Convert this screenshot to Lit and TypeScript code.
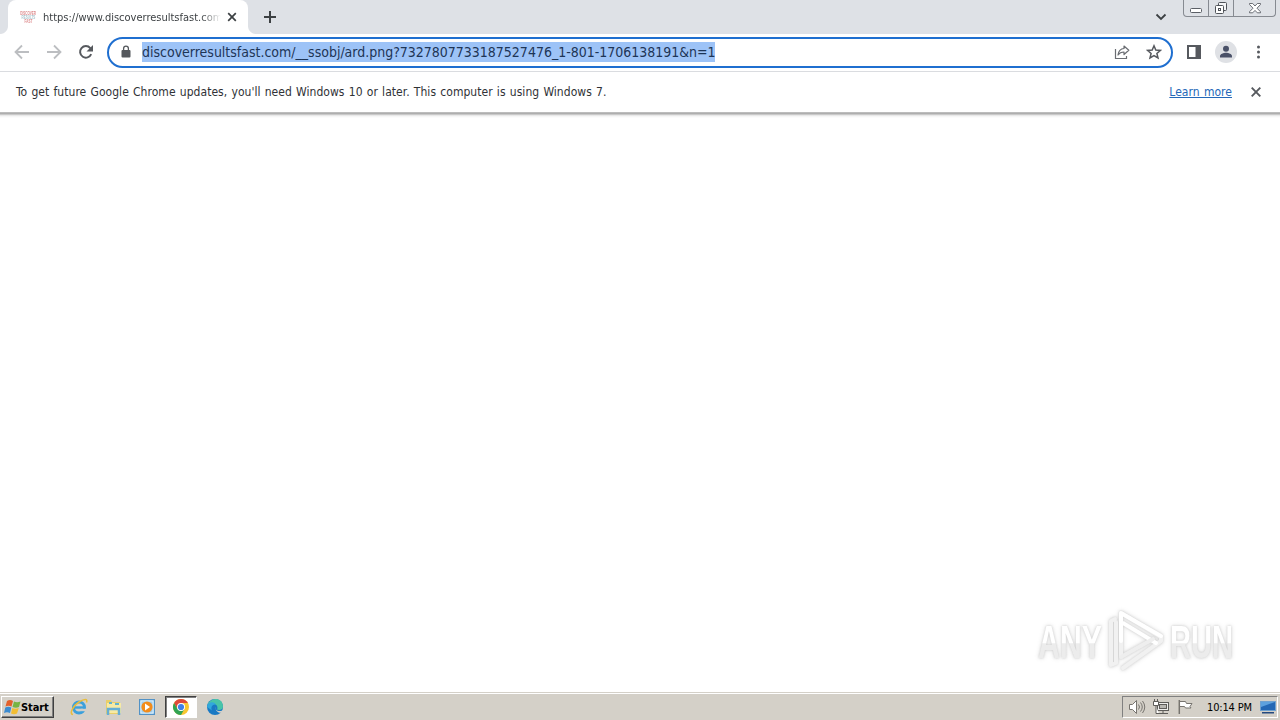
import { LitElement, html, css, svg } from 'lit';
import { customElement, property } from 'lit/decorators.js';

const FONT = css`"DejaVu Sans Condensed", "DejaVu Sans", Tahoma, sans-serif`;

@customElement('browser-tabs')
class BrowserTabs extends LitElement {
    static styles = css`
    :host {
        display: flex;
        height: 34px;
        background: #dee1e6;
        font-family: ${FONT};
        color: #3c4043;
    }
    .tab {
        display: flex;
        align-items: center;
        box-sizing: border-box;
        width: 240px;
        margin-left: 8px;
        padding-left: 12px;
        background: #fff;
        border-radius: 8px 8px 0 0;
        position: relative;
    }
    .tab::before, .tab::after {
        content: '';
        position: absolute;
        bottom: 0;
        width: 8px;
        height: 8px;
    }
    .tab::before {
        left: -8px;
        background: radial-gradient(circle at 0 0, #dee1e6 7.5px, #fff 8.5px);
    }
    .tab::after {
        right: -8px;
        background: radial-gradient(circle at 100% 0, #dee1e6 7.5px, #fff 8.5px);
    }
    .favicon {
        display: flex;
        flex-direction: column;
        align-items: center;
        width: 16px;
        font: bold 5px/4px "Liberation Sans", sans-serif;
        color: #dd8a8c;
    }
    .favicon span {
        transform: scaleX(0.6);
    }
    .favicon .mid {
        color: #a9c3cc;
    }
    .title {
        width: 178px;
        margin-left: 7px;
        overflow: hidden;
        white-space: nowrap;
        font-size: 11px;
        -webkit-mask-image: linear-gradient(to right, #000 158px, transparent 178px);
        mask-image: linear-gradient(to right, #000 158px, transparent 178px);
    }
    .close {
        margin-left: 6px;
    }
    .plus {
        margin: 9px 0 0 14px;
    }
    .search {
        margin: 13px 16px 0 auto;
    }
    .controls {
        display: flex;
        box-sizing: border-box;
        width: 93px;
        height: 17px;
        margin-right: 4px;
        border: 1px solid #868a91;
        border-top: none;
        border-radius: 0 0 4px 4px;
    }
    .controls div {
        display: flex;
        justify-content: center;
        width: 25px;
        box-sizing: border-box;
        border-right: 1px solid #868a91;
    }
    .controls div:last-child {
        flex: 1;
        border-right: none;
    }
    svg {
        display: block;
        fill: none;
    }
    `;

    render() {
        return html`
            <div class="tab">
                <div class="favicon"><span>DISCOVER</span><span class="mid">RESULTS</span><span>FAST</span></div>
                <div class="title">https://www.discoverresultsfast.com</div>
                <svg class="close" width="10" height="10" stroke="#3c4043" stroke-width="1.7"><path d="M1.2 1.2 8.8 8.8M8.8 1.2 1.2 8.8"/></svg>
            </div>
            <svg class="plus" width="16" height="16" stroke="#3c4043" stroke-width="2"><path d="M8 2v12M2 8h12"/></svg>
            <svg class="search" width="12" height="8" stroke="#3c4043" stroke-width="1.8"><path d="M1.5 1.5 6 6l4.500-4.500"/></svg>
            <div class="controls">
                <div><svg width="24" height="16" stroke="#5b5f66"><rect x="6.500" y="8.500" width="11" height="4" rx="1" fill="#fff"/></svg></div>
                <div><svg width="24" height="16" stroke="#4f5359" fill="#fff"><rect x="9.500" y="2.500" width="8" height="8" rx="1" fill="#f4f5f7"/><rect x="6.500" y="5.500" width="8" height="8" rx="1" fill="#fff"/><rect x="9.500" y="8.500" width="2" height="2"/></svg></div>
                <div><svg width="24" height="16" stroke="#5b5f66" stroke-width="0.9"><path fill="#fff" d="M6.500 3.500h3.200L12 6l2.300-2.500h3.200v1L14 8.200l3.500 3.600v1h-3.200L12 10.400l-2.300 2.400H6.500v-1L10 8.200 6.500 4.500z"/></svg></div>
            </div>
        `;
    }
}

@customElement('browser-toolbar')
class BrowserToolbar extends LitElement {
    static styles = css`
    :host {
        display: flex;
        align-items: center;
        height: 38px;
        padding: 0 0 1px 14px;
        box-sizing: border-box;
        background: #fff;
        border-bottom: 1px solid #dadce0;
        font-family: ${FONT};
    }
    svg {
        display: block;
        fill: none;
        flex: none;
    }
    .nav {
        display: flex;
        gap: 16px;
    }
    .omnibox {
        display: flex;
        align-items: center;
        box-sizing: border-box;
        width: 1066px;
        height: 31px;
        margin: 1px 0 0 13px;
        padding: 0 9px 1px 11px;
        border: 2px solid #1f6fd0;
        border-radius: 16px;
    }
    .url {
        width: 573px;
        height: 20px;
        margin-left: 10px;
        background: #9dc3f7;
        color: #1d3556;
        font-size: 14px;
        line-height: 21px;
        white-space: nowrap;
        letter-spacing: -0.01px;
    }
    .share {
        margin-left: auto;
    }
    .star {
        margin-left: 16px;
    }
    .panel {
        margin-left: 13px;
    }
    .avatar {
        margin-left: 13px;
    }
    .menu {
        margin-left: 13px;
    }
    `;

    @property() url = '';

    render() {
        return html`
            <div class="nav">
                <svg width="16" height="16" stroke="#bcbec1" stroke-width="1.8"><path d="M15 8H2M8 1.500 1.500 8 8 14.500"/></svg>
                <svg width="16" height="16" stroke="#bcbec1" stroke-width="1.8"><path d="M1 8h13M8 1.500 14.500 8 8 14.500"/></svg>
                <svg width="16" height="16"><path stroke="#56595e" stroke-width="2" d="M13.200 10.200A5.800 5.800 0 1 1 12.300 4.100L14 6"/><path fill="#56595e" d="M15 1v6.500H8.500z"/></svg>
            </div>
            <div class="omnibox">
                <svg width="12" height="14"><rect x="1.500" y="5" width="9" height="7.500" rx="1" fill="#55585d"/><path stroke="#55585d" stroke-width="1.300" d="M3.600 5.500V3.600a2.400 2.400 0 0 1 4.800 0v1.900"/></svg>
                <div class="url">${this.url}</div>
                <svg class="share" width="16" height="16" stroke="#6a6d72" stroke-width="1.200"><path d="M1.500 5v9.500h11V12"/><path stroke-linejoin="round" d="M4 11c.5-4 2.500-6.300 6-6.500V2l4.800 4.300L10 10.500V8C7.500 8 5.500 8.800 4 11z"/></svg>
                <svg class="star" width="16" height="16" stroke="#56595e" stroke-width="1.500"><path d="M8 1.800l1.800 4.200 4.600.4-3.500 3 1.100 4.500L8 11.500l-4 2.400 1.100-4.500-3.500-3L6.200 6z"/></svg>
            </div>
            <svg class="panel" width="16" height="16"><rect x="2" y="2" width="12" height="12" stroke="#56595e" stroke-width="2"/><path fill="#56595e" d="M9.500 2H14v12H9.500z"/></svg>
            <svg class="avatar" width="22" height="22"><circle cx="11" cy="11" r="11" fill="#dfe1e5"/><circle cx="11" cy="7.800" r="3" fill="#4a5168"/><path fill="#4a5168" d="M5 16.500v-1.300c0-2.200 3.600-3.400 6-3.400s6 1.200 6 3.400v1.300z"/></svg>
            <svg class="menu" width="16" height="16" viewBox="0 0 16 16"><g fill="#56595e"><circle cx="8.500" cy="3" r="1.500"/><circle cx="8.500" cy="8" r="1.500"/><circle cx="8.500" cy="13" r="1.500"/></g></svg>
        `;
    }
}

@customElement('info-bar')
class InfoBar extends LitElement {
    static styles = css`
    :host {
        display: flex;
        align-items: center;
        box-sizing: border-box;
        height: 40px;
        padding: 0 19px 0 16px;
        background: #fff;
        font: 12px ${FONT};
        color: #303236;
        white-space: nowrap;
        letter-spacing: 0.04px;
        word-spacing: 0.75px;
    }
    a {
        margin-left: auto;
        color: #2468b8;
        text-decoration: underline;
    }
    svg {
        margin-left: 19px;
    }
    `;

    render() {
        return html`
            <span>To get future Google Chrome updates, you'll need Windows 10 or later. This computer is using Windows 7.</span>
            <a>Learn more</a>
            <svg width="10" height="10" stroke="#56595e" stroke-width="1.9"><path d="M.7.7l8.600 8.600M9.300.7.7 9.300"/></svg>
        `;
    }
}

@customElement('any-run-mark')
class AnyRunMark extends LitElement {
    static styles = css`
    :host {
        display: flex;
        align-items: center;
        font: bold 47px/60px "Liberation Sans", sans-serif;
        filter: drop-shadow(0 0 1px #d0d0d0) drop-shadow(0 0 2px #e2e2e2);
    }
    .word {
        width: 65px;
        padding-top: 3px;
    }
    .word span {
        display: inline-block;
        transform: scaleX(0.645);
        transform-origin: 0 50%;
        background: linear-gradient(#fff 51%, #ececec 53%);
        -webkit-background-clip: text;
        background-clip: text;
        color: transparent;
    }
    .word:last-child span {
        transform: scaleX(0.62);
    }
    svg {
        display: block;
        margin: 0 4px 0 5px;
        fill: none;
    }
    `;

    render() {
        return html`
            <div class="word"><span>ANY</span></div>
            <svg width="58" height="62" stroke-width="4" stroke-linejoin="round" stroke-linecap="round">
                <path stroke="#f1f1f1" d="M13 47V3l40 24v4L15 58"/>
                <path stroke="#f1f1f1" d="M7 9 3 11v44l5-2V12"/>
                <path stroke="#fff" d="M13 31V3l40 23M15 13l33 20"/>
                <path stroke="#eee" d="M13 47l32-18"/>
            </svg>
            <div class="word"><span>RUN</span></div>
        `;
    }
}

const icons = {
    ie: svg`
        <circle cx="10" cy="10.500" r="5.500" stroke="#3ba0dc" stroke-width="3"/>
        <path stroke="#3ba0dc" stroke-width="2.400" d="M5 10.500h11"/>
        <path fill="#d2cfca" d="M12 11.800h6v2.400h-6z"/>
        <path stroke="#e8bd3c" stroke-width="1.500" d="M4 17.500C-.5 17 4.500 8.500 10 5s9-3.500 7.500.5"/>`,
    folder: svg`
        <path fill="#e9cf69" d="M3 3h5l1 2h8v12H3z"/>
        <path fill="#f7eaa4" d="M4 6h14v10H4z"/>
        <path fill="#63b3cf" d="M6 5h3v2H6zM12 6h4v2h-4z"/>
        <path stroke="#65aed5" stroke-width="2.500" d="M5 18v-6h11v6"/>`,
    player: svg`
        <rect x="2.500" y="2.500" width="15" height="15" fill="#9ccbed" stroke="#5292c6"/>
        <path stroke="#dceffa" d="M4 4h12v12H4z"/>
        <circle cx="10" cy="10" r="5.600" fill="#f28c1b"/>
        <path fill="#fff" d="M8 6.500v7l5-3.500z"/>`,
    chrome: svg`
        <circle cx="10" cy="10" r="8" fill="#f8c630"/>
        <path fill="#df493b" d="M3.070 6A8 8 0 0 1 16.930 6H10L6.540 12z"/>
        <path fill="#30a353" d="M3.070 6A8 8 0 0 0 10 18l3.460-6H6.540z"/>
        <circle cx="10" cy="10" r="4" fill="#fff"/>
        <circle cx="10" cy="10" r="3.100" fill="#4080e8"/>`,
    edge: svg`
        <circle cx="10" cy="10" r="8" fill="#1979c4"/>
        <path fill="#48c4a8" d="M2.500 7.500C6 0 17.500 0 18 9.500c0 3-3 4-6 3 1.500-3-1-6-4.500-6-2 0-3.500.4-5 1z"/>
        <path fill="#31a8dc" d="M2 10c.5-4.500 6-6.500 9-2.500-4-.5-5.500 3-4 6z"/>
        <path fill="#d4d0c8" d="M10.500 10c-1 3 2.500 5 7 3.500l1.500-.5-.5 2c-3 2-8.500 0-8-5z"/>`
};

@customElement('task-bar')
class TaskBar extends LitElement {
    static styles = css`
    :host {
        display: flex;
        align-items: center;
        box-sizing: border-box;
        height: 28px;
        padding: 1px 2px 0 1px;
        background: #d4d0c8;
        border-top: 1px solid #d4d0c8;
        box-shadow: inset 0 1px #fff;
        font: 11px ${FONT};
        color: #000;
    }
    svg {
        display: block;
        fill: none;
    }
    .start {
        display: flex;
        align-items: center;
        box-sizing: border-box;
        width: 53px;
        height: 22px;
        padding-left: 2px;
        border: 1px solid;
        border-color: #fff #404040 #404040 #fff;
        box-shadow: inset -1px -1px #808080;
        font-weight: bold;
        letter-spacing: -0.1px;
    }
    .start svg {
        flex: none;
        margin-right: -1px;
    }
    .apps {
        display: flex;
        gap: 2px;
        margin-left: 9px;
    }
    .app {
        display: flex;
        align-items: center;
        justify-content: center;
        box-sizing: border-box;
        width: 32px;
        height: 22px;
    }
    .app.active {
        background: #fff;
        border: 1px solid;
        border-color: #404040 #fff #fff #404040;
        box-shadow: inset 1px 1px #808080;
    }
    .tray {
        display: flex;
        align-items: center;
        box-sizing: border-box;
        width: 156px;
        height: 22px;
        margin-left: auto;
        padding-left: 4px;
        border: 1px solid;
        border-color: #808080 #fff #fff #808080;
    }
    .tray svg {
        flex: none;
        margin-right: 6px;
    }
    .clock {
        width: 46px;
        margin-left: 7px;
        margin-right: 8px;
        white-space: nowrap;
        letter-spacing: -0.15px;
    }
    `;

    @property() active = 'chrome';

    render() {
        return html`
            <div class="start">
                <svg width="18" height="18"><path fill="#e3602b" d="M3 3c2-1.500 4-1.500 6 0L7.500 8.500c-2-1-4-1-6 0z"/><path fill="#77b443" d="M10 3.500c2 1 4 1 6.500 0L15 9c-2 1-4 1-6.500 0z"/><path fill="#3b8bd0" d="M1.300 9.500c2-1 4-1 6 0L6 15c-2-1-4-1-6 0z"/><path fill="#f2bd32" d="M8.300 10c2 1 4 1 6.500 0L13 15.500c-2 1-4 1-6 0z"/></svg>
                <span>Start</span>
            </div>
            <div class="apps">
                ${Object.entries(icons).map(([name, icon]) => html`
                    <div class="app ${name === this.active ? 'active' : ''}">
                        <svg width="18" height="18" viewBox="1 1 18 18">${icon}</svg>
                    </div>`)}
            </div>
            <div class="tray">
                <svg width="19" height="18" stroke="#77746f" fill="#fff"><path fill="#fff" d="M2.500 6.500h3l4-4v13l-4-4h-3z"/><path fill="none" d="M11.500 6.500q2 2.500 0 5M13.500 4.500q3.500 4.500 0 9M15.500 3q4.500 6 0 12"/></svg>
                <svg width="18" height="18" stroke="#5e5c59"><rect x="5.500" y="4.500" width="11" height="8" fill="#efeeec"/><rect x="7.500" y="6.500" width="7" height="4" fill="#b9b7b2"/><path d="M11 13v2.500M6 15.500h10"/><path fill="#fff" d="M1.500 3.500h5v4h-5zM2.500 1v2.500M5.500 1v2.500M4 8v7.500h3"/></svg>
                <svg width="18" height="18" stroke="#77746f"><path fill="#fff" d="M3.500 3.500h6l1 2h5.500l-2 3 1 1.500H9.500l-1-1.500h-5"/><path stroke-width="1.500" d="M3.300 2v14"/></svg>
                <span class="clock">10:14 PM</span>
                <svg width="17" height="16"><rect x=".5" y="2.500" width="15" height="9" fill="#2468b5" stroke="#70a1cf"/><path fill="#5da1de" d="M1 3h14L1 8z"/><path fill="#24497e" d="M2 13h12v1.500H2z"/></svg>
            </div>
        `;
    }
}

@customElement('app-root')
class AppRoot extends LitElement {
    static styles = css`
    :host {
        display: flex;
        flex-direction: column;
        width: 1280px;
        height: 720px;
        overflow: hidden;
        background: #fff;
    }
    .page {
        flex: 1;
        position: relative;
        background: linear-gradient(#d0d0d0, #a8a8a8 1px, #b4b4b4 2px, #dedede 3px, #f3f3f3 4px, #fff 6px);
    }
    any-run-mark {
        position: absolute;
        left: 1038px;
        bottom: 20px;
    }
    `;

    render() {
        return html`
            <browser-tabs></browser-tabs>
            <browser-toolbar url="discoverresultsfast.com/__ssobj/ard.png?7327807733187527476_1-801-1706138191&amp;n=1"></browser-toolbar>
            <info-bar></info-bar>
            <div class="page"><any-run-mark></any-run-mark></div>
            <task-bar></task-bar>
        `;
    }
}
